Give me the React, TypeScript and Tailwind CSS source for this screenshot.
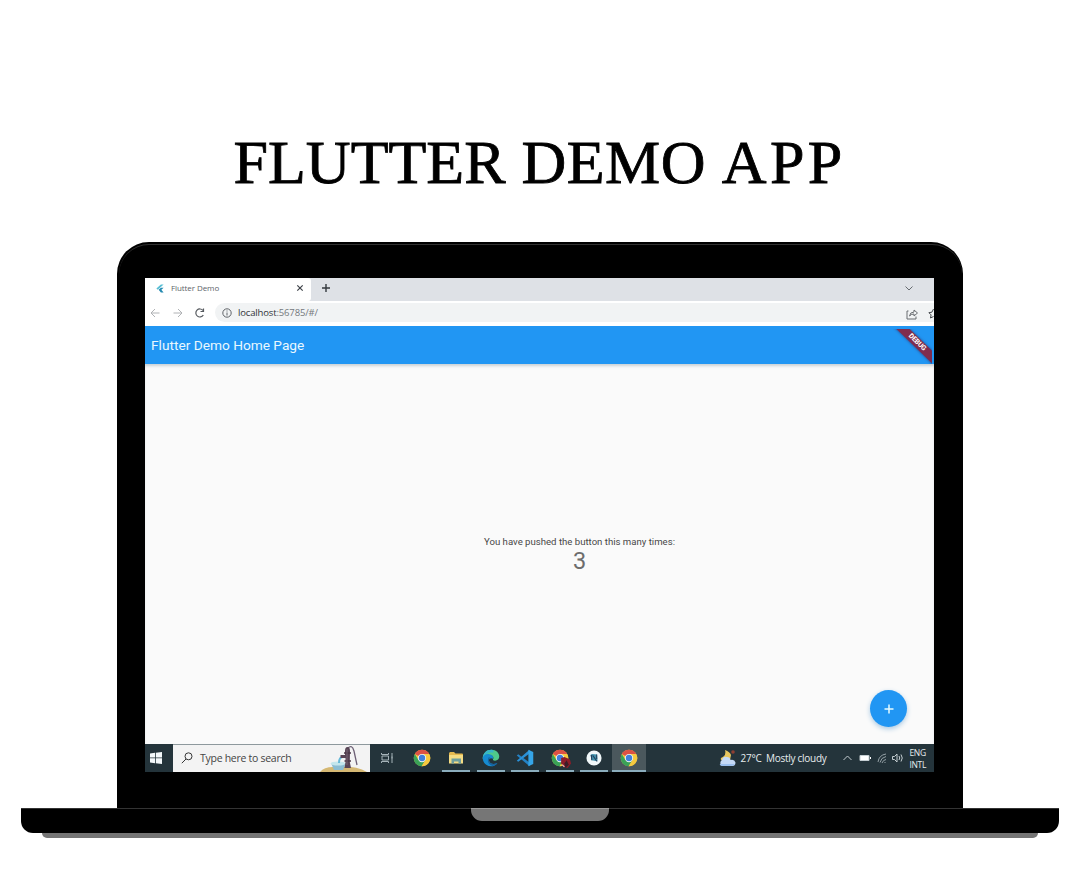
import React from "react";

function ChromeIcon() {
  return (
    <svg viewBox="0 0 48 48" className="h-[18px] w-[18px]">
      <circle cx="24" cy="24" r="22" fill="#f6c93f" />
      <path d="M24 24 4.900 13A22 22 0 0 1 43.100 13H24Z" fill="#dc5145" />
      <path d="M4.900 13A22 22 0 0 0 23 46l10.500-17L24 34 14.500 29.500Z" fill="#3aa257" />
      <path d="M24 13h19.100A22 22 0 0 1 23 46l10.500-16.500Z" fill="#f6c93f" />
      <circle cx="24" cy="24" r="11" fill="#f1f5f5" />
      <circle cx="24" cy="24" r="8.500" fill="#3f7fdc" />
    </svg>
  );
}

function FolderIcon() {
  return (
    <svg viewBox="0 0 16 14" className="h-[14px] w-4">
      <path d="M1 2.500Q1 1 2.300 1H6l1.500 1.500H14Q15 2.500 15 3.500V12H1Z" fill="#e5b94f" />
      <path d="M1 4h14v8.500H1Z" fill="#f5dc83" />
      <path d="M3.500 7.500h9.500v5h-2.500v-2H6v2H3.500Z" fill="#6f9f9d" />
    </svg>
  );
}

function EdgeIcon() {
  return (
    <svg viewBox="0 0 24 24" className="h-[18px] w-[18px]">
      <path d="M1 13C1 5.500 6 1 12.500 1 19 1 23 5.500 23 10c0 3.500-2.500 5.500-5.500 5.500-3 0-3.500-1.500-2.500-2.500 1-2-1-5-5-5-5 0-7 3-9 5Z" fill="#4fca8b" />
      <path d="M1 13C1 5.500 6 1 12.500 1c3 0 4 2 2 4C10 4 6 6 1 13Z" fill="#38b6c9" />
      <path d="M1 12c1-4 5-6 9-5 4 .5 6 4 4.500 6-3-2-6 0-5 3 1 4 6 5 11 2.500-2 3-5 4.500-8.500 4.500C5.500 23 1 18 1 12Z" fill="#168bd0" />
      <path d="M9 11c-3 5 0 10 5 11.500 3-.5 5.500-2 6.500-4-5 2.500-10 1.500-11-2.500-.5-2 0-4 2-4.500Z" fill="#16639f" />
    </svg>
  );
}

function CodeIcon() {
  return (
    <svg viewBox="0 0 24 24" className="h-[18px] w-[18px]">
      <path d="m1 8.500 2-1.500 15 11v5L1 8.500Z" fill="#2482c5" />
      <path d="m1 15.500 2 1.500L18 6V1L1 15.500Z" fill="#2a91d8" />
      <path d="M16.500 1 23 4v16l-6.500 3Z" fill="#35a5e8" />
    </svg>
  );
}

function StudioIcon() {
  return (
    <svg viewBox="0 0 18 18" className="h-4 w-4">
      <circle cx="9" cy="9" r="8.500" fill="#f0f7f9" />
      <path d="M5 5.500 7 4.500l5.500.5.500 7-2 .5-4.500-1Z" fill="#4292ad" />
      <path d="m7.500 6 5 7M6 5.500l.5 6M12 5v5" stroke="#243e5b" strokeWidth="1.200" />
    </svg>
  );
}

function PumpArt() {
  return (
    <svg viewBox="0 0 50 27" className="h-[27px] w-[50px]">
      <path d="M0 27q4-5 13-5 22-2 34 5Z" fill="#d5b873" />
      <path d="m11 18 3 7h9l3-7Z" fill="#8cbdd2" />
      <ellipse cx="18" cy="18.500" rx="7.500" ry="2" fill="#c4e6ed" />
      <path d="M23 12q-4 0-4 6" fill="none" stroke="#65b9d8" strokeWidth="2" />
      <path d="M28 3q4-4 6 3l3 14" fill="none" stroke="#6d6075" strokeWidth="1.300" />
      <path d="M25 6q0-4 2.500-4T30 6l-.2 11 1.200 6h-6.500l1-6v-4h-5V10H25Z" fill="#584455" />
      <path d="M24 8h7M24.500 16h6.500" stroke="#493645" strokeWidth="1.500" />
      <path d="M27 4v16" stroke="#82707e" strokeWidth=".7" />
    </svg>
  );
}

function WeatherIcon() {
  return (
    <svg viewBox="0 0 18 18" className="h-[18px] w-[18px]">
      <path d="M7 1q2 5-4 8-1 2 2 3l7-1 1-5Q12 3 7 1Z" fill="#e8c65e" />
      <circle cx="15" cy="3" r="1.800" fill="#8f3f32" />
      <path d="M4 17a3.500 3.500 0 0 1 0-6q1-4 5-3 3 0 3.500 3 4-1 5 2.500Q17.500 17 14 17Z" fill="#c5daf7" />
      <path d="M1.700 15H17q-1 2-4 2H4q-2 0-2.300-2" fill="#9cc0ef" />
    </svg>
  );
}

function Task({ children, line = true, active = false }: { children: React.ReactNode; line?: boolean; active?: boolean }) {
  return (
    <div className={`relative flex h-full w-[34.500px] shrink-0 items-center justify-center ${active ? "bg-[#4b585d]" : ""}`}>
      {children}
      {line && <span className={`absolute bottom-0 h-[1.500px] bg-[#8badbd] ${active ? "w-full" : "w-7"}`} />}
    </div>
  );
}

function TabBar() {
  return (
    <div className="flex h-[22.500px] bg-[#dee1e6]">
      <div className="flex w-[166px] items-center rounded-tr-[3px] rounded-br-[3px] bg-white pr-[7px] pb-[2px] pl-[10px]">
        <svg viewBox="0 0 10 10" className="h-[9px] w-[10px]">
          <path d="M6 .5 1 5l1.500 1.500L9 .5Z" fill="#58bed4" />
          <path d="m3.500 6.500 2.500-2.200h3L6.500 6.500 9 9.500H6Z" fill="#2489b0" />
        </svg>
        <span className="ml-[6px] flex-1 font-['Open_Sans',sans-serif] text-[8px] leading-[10px] tracking-[-0.080px] text-[#60646a]">Flutter Demo</span>
        <svg viewBox="0 0 8 8" className="h-2 w-2"><path d="m1.300 1.300 5.400 5.400m0-5.400L1.300 6.700" stroke="#3e4349" strokeWidth="1.200" /></svg>
      </div>
      <div className="flex flex-1 items-center justify-between pr-5 pb-[2px] pl-[10px]">
        <svg viewBox="0 0 10 10" className="h-[10px] w-[10px]"><path d="M5 1v8M1 5h8" stroke="#34393e" strokeWidth="1.400" /></svg>
        <svg viewBox="0 0 10 7" className="h-[7px] w-[10px]"><path d="m1.500 1.500 3.500 3.500 3.500-3.500" fill="none" stroke="#666b70" /></svg>
      </div>
    </div>
  );
}

function AddressBar() {
  return (
    <div className="flex h-[25px] items-center bg-white pb-px pl-[5px]">
      <svg viewBox="0 0 58 12" className="h-3 w-[58px]" fill="none">
        <path d="M9.500 6H1m4-4L1 6l4 4" stroke="#b0b2b5" />
        <path d="M23.500 6H32m-4-4 4 4-4 4" stroke="#b0b2b5" />
        <path d="M53 3.500A4 4 0 1 0 53.300 8M53.500 1.500v3h-3" stroke="#565a5f" strokeWidth="1.200" />
      </svg>
      <div className="ml-[7px] flex h-[19px] flex-1 items-center rounded-l-full bg-[#f1f3f4] pl-[7px]">
        <svg viewBox="0 0 10 10" className="h-[10px] w-[10px]" fill="none"><circle cx="5" cy="5" r="4.200" stroke="#5f6368" /><path d="M5 4.500v3M5 2.500v1" stroke="#5f6368" /></svg>
        <span className="ml-[6px] flex-1 font-['Open_Sans',sans-serif] text-[9.500px] leading-3 tracking-[-0.150px] text-[#74787c]"><span className="text-[#303438]">localhost</span>:56785/#/</span>
        <svg viewBox="0 0 28 12" className="mt-[2px] h-3 w-7" fill="none" stroke="#686c70" strokeWidth="1">
          <path d="M2.500 3H1v8h9V8.500" />
          <path d="M3.500 8Q4 4 8 4V2l3.500 3L8 8V6Q5 6 3.500 8Z" />
          <path d="m27.500 1-1.600 3.200-3 .5 2.200 2.200-.6 3.100 3-1.500" stroke="#43474b" />
        </svg>
      </div>
    </div>
  );
}

function Taskbar() {
  return (
    <div className="flex h-[27.500px] items-center bg-[#24343b] font-['Open_Sans',sans-serif] text-[#e7edef]">
      <div className="flex w-[28px] shrink-0 pl-[5px]">
        <svg viewBox="0 0 12 12" className="h-3 w-3"><path d="m0 1.500 5-.7v4.800H0Zm5.800-.8L12 0v5.600H5.800ZM0 6.300h5v4.900l-5-.7Zm5.800 0H12V12l-6.200-.8Z" fill="#f3f8fa" /></svg>
      </div>
      <div className="flex h-full w-[197px] shrink-0 items-center border-t border-[#8e999d] bg-[#f3f3f3] pl-[8px]">
        <svg viewBox="0 0 12 12" className="h-3 w-3" fill="none"><circle cx="7.500" cy="4.300" r="3.500" stroke="#353535" /><path d="M5 7 .8 11.200" stroke="#353535" /></svg>
        <span className="ml-[7px] flex-1 text-[10.500px] leading-4 tracking-[-0.280px] whitespace-nowrap text-[#444]">Type here to search</span>
        <PumpArt />
      </div>
      <Task line={false}>
        <svg viewBox="0 0 13 12" className="h-3 w-[13px]" fill="none" stroke="#a5b3b9"><path d="M.5 1v1.500h7V1M.5 11V9.500h7V11M1 4h6.500v4H1ZM11 1v10M11 4.500v2" /></svg>
      </Task>
      <Task line={false}><ChromeIcon /></Task>
      <Task><FolderIcon /></Task>
      <Task><EdgeIcon /></Task>
      <Task><CodeIcon /></Task>
      <Task>
        <span className="relative flex"><ChromeIcon />
          <svg viewBox="0 0 10 10" className="absolute right-[-2px] bottom-[-1px] h-[11px] w-[11px]"><path d="M1 1 4 0l5 2 1 4-3 4-4-1-2-3Z" fill="#8c1c29" /><path d="m4 6 2-3 2 4-3 3Z" fill="#3b1d29" /><path d="m2 7 2 2" stroke="#e4c5c5" /></svg>
        </span>
      </Task>
      <Task><StudioIcon /></Task>
      <Task active><ChromeIcon /></Task>
      <div className="flex h-full flex-1 items-center justify-end pr-[8px]">
        <WeatherIcon />
        <span className="mt-px ml-[5px] w-[86px] text-[10px] leading-4 tracking-[-0.280px] whitespace-pre">27°C  Mostly cloudy</span>
        <svg viewBox="0 0 62 14" className="ml-[15px] h-[14px] w-[62px]" fill="none" stroke="#c4cdd1">
          <path d="m1.500 9 4-4 4 4" />
          <path d="M18 4.500h9v5h-9Z" fill="#fff" /><path d="M28.500 6v2" stroke="#fff" />
          <path d="M36 11q1-7 8-8M38 11.500q1-5 6-6M40 12q1-3 4-3.500M42.500 12l1-1" stroke="#94a0a5" />
          <path d="M50.500 5.500h2l2.500-2.500v8l-2.500-2.500h-2ZM57 5q1.500 2 0 4M59 3.500q2.500 3.500 0 7" />
        </svg>
        <span className="mt-[2px] ml-[6px] text-[8.500px] leading-[12px] tracking-[-0.350px]">ENG<br />INTL</span>
      </div>
    </div>
  );
}

export default function App() {
  return (
    <main className="flex h-[875px] w-[1079px] flex-col items-center overflow-hidden bg-white pt-[126px]">
      <h1 className="mr-[3px] flex h-[72px] w-[609px] justify-between font-['Liberation_Serif',serif] text-[62px] leading-[72px] text-black [-webkit-text-stroke:0.800px_black] [font-kerning:none]">
        <span>FLUTTER</span><span className="tracking-[0.500px]">DEMO</span><span className="-mr-[3px] tracking-[3.300px]">APP</span>
      </h1>
      <section className="mt-[44px] ml-[1px] h-[566px] w-[846px] rounded-t-[32px] bg-black p-[1.500px]">
        <div className="h-full rounded-t-[30px] border-t border-[#303030] pr-[28px] pl-[26.500px] pt-[33.500px]">
          <div className="h-[493.500px] w-[789px] overflow-hidden bg-[#fafafa]">
            <TabBar />
            <AddressBar />
            <header className="flex h-[38.500px] items-center bg-[#2196f3] pl-[6px] font-['Roboto',sans-serif] text-[13.700px] text-[#e9f8ff]">
              <span className="pt-[2px]">Flutter Demo Home Page</span>
              <div className="relative mr-[2px] ml-auto h-[35px] w-[39px] self-end overflow-hidden">
                <div className="absolute top-[9px] -left-[7px] flex h-[9px] w-[62px] rotate-[44deg] items-center justify-center bg-[#802c4e] text-[7px] leading-none font-bold tracking-[-0.200px] text-white shadow-[0_0_3px_#36366f]">DEBUG</div>
              </div>
            </header>
            <div className="flex h-[380px] flex-col shadow-[inset_0_3px_3px_-1px_#c9d1d6]">
              <div className="mt-[171px] ml-[80px] text-center font-['Roboto',sans-serif] text-[9.600px] leading-[14px] text-[#484848]">You have pushed the button this many times:</div>
              <div className="ml-[80px] text-center font-['Roboto',sans-serif] text-[23.500px] leading-[24px] text-[#6d6d6d]">3</div>
              <div className="mt-auto mr-[27px] mb-[17px] flex h-[37px] w-[37px] items-center justify-center self-end rounded-full bg-[#2196f3] shadow-[0_2px_5px_#a9c9e3]">
                <svg viewBox="0 0 10 10" className="h-[10px] w-[10px]"><path d="M5 .5v9M.5 5h9" stroke="#e5fbff" strokeWidth="1.500" /></svg>
              </div>
            </div>
            <Taskbar />
          </div>
        </div>
      </section>
      <div className="ml-[1px] flex h-[25px] w-[1038px] justify-center rounded-b-[12px] border-t border-[#333] bg-black">
        <div className="-mt-px h-[13px] w-[138px] rounded-b-[11px] border-t border-[#999] bg-[#767676]" />
      </div>
      <div className="ml-[1px] h-[5px] w-[996px] rounded-b-[5px] bg-[#757575]" />
    </main>
  );
}
